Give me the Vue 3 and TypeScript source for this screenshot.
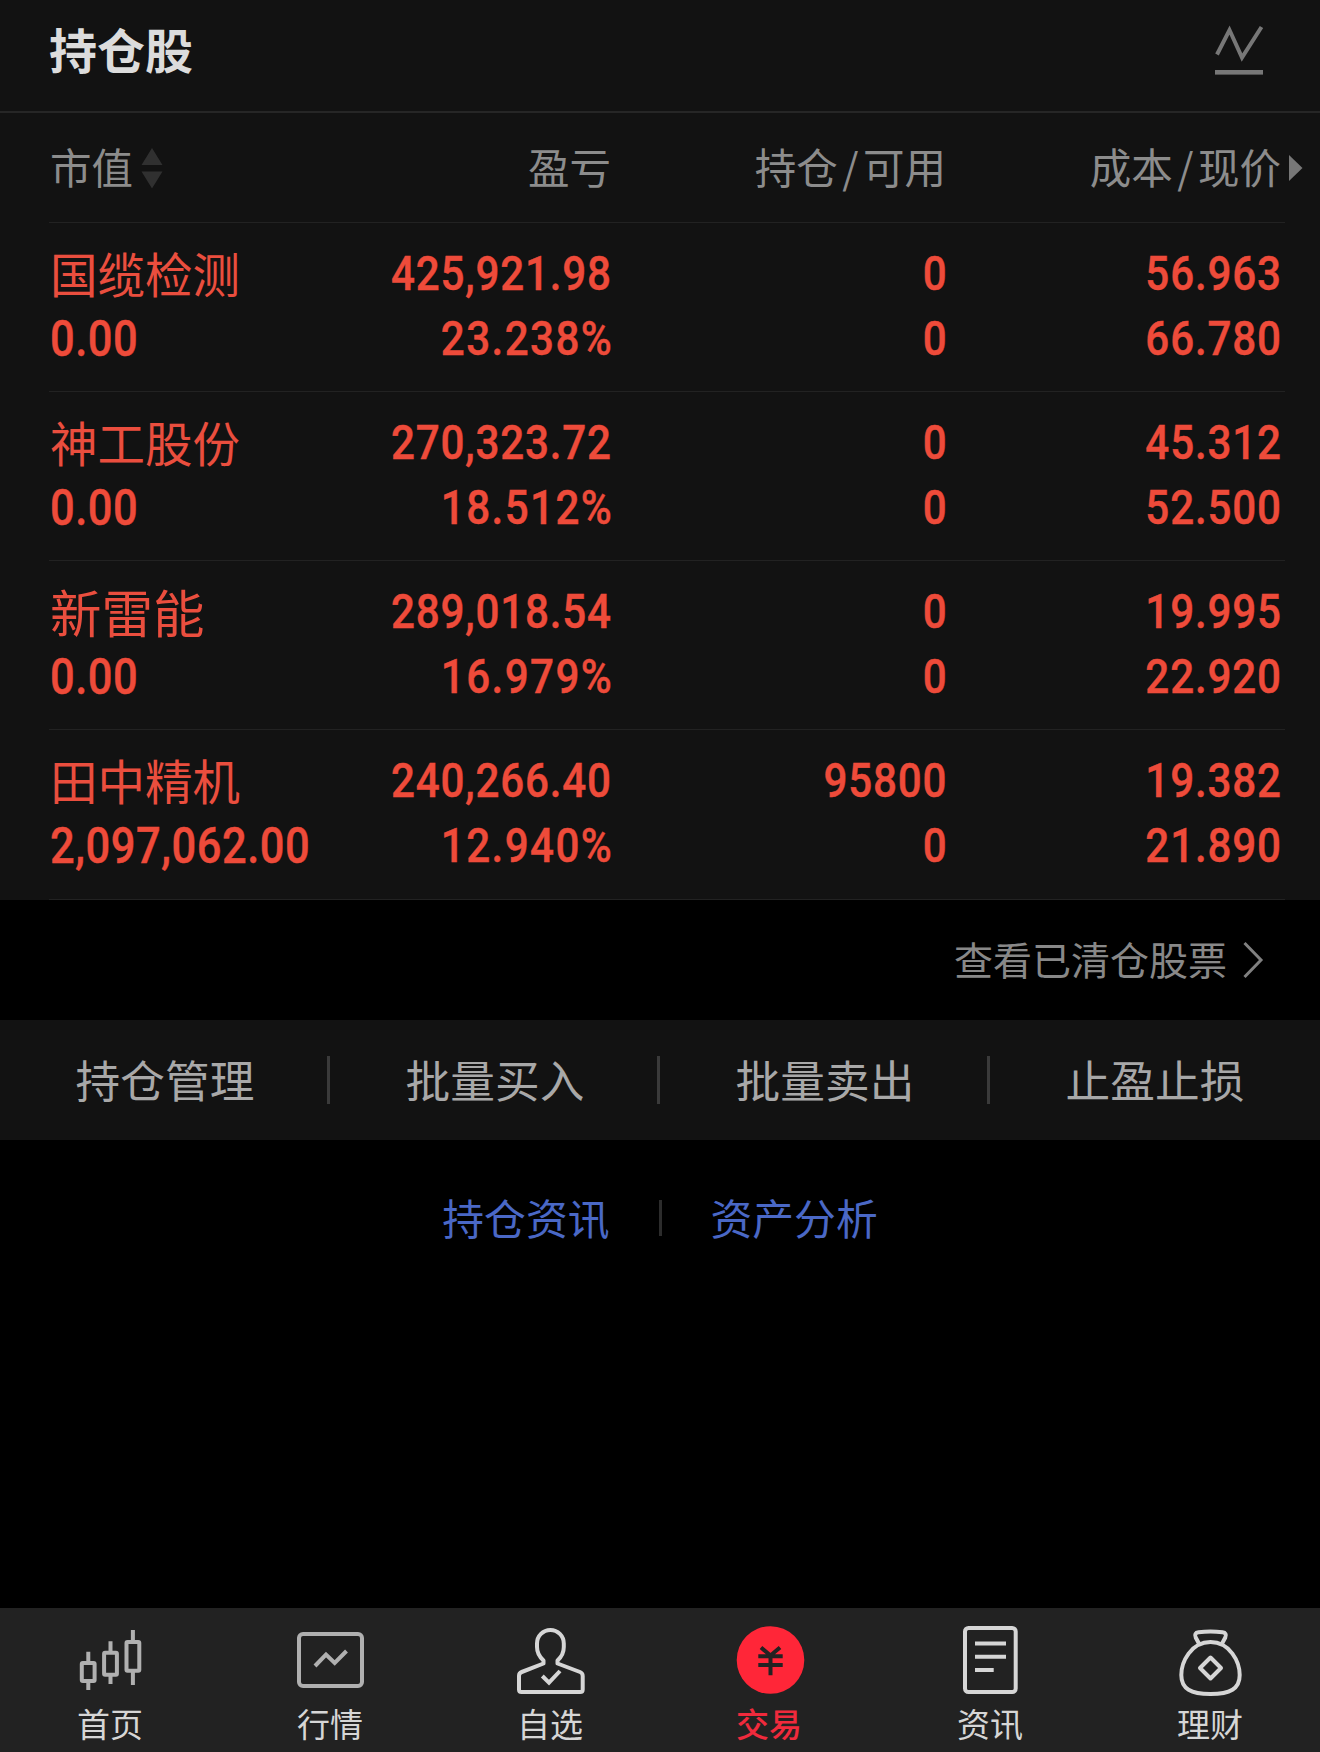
<script setup lang="ts">
interface Holding {
  name: string
  value: string
  profit: string
  ratio: string
  held: string
  available: string
  cost: string
  price: string
}

const holdings: Holding[] = [
  { name: '国缆检测', value: '0.00', profit: '425,921.98', ratio: '23.238%', held: '0', available: '0', cost: '56.963', price: '66.780' },
  { name: '神工股份', value: '0.00', profit: '270,323.72', ratio: '18.512%', held: '0', available: '0', cost: '45.312', price: '52.500' },
  { name: '新雷能', value: '0.00', profit: '289,018.54', ratio: '16.979%', held: '0', available: '0', cost: '19.995', price: '22.920' },
  { name: '田中精机', value: '2,097,062.00', profit: '240,266.40', ratio: '12.940%', held: '95800', available: '0', cost: '19.382', price: '21.890' },
]

const actions: string[] = ['持仓管理', '批量买入', '批量卖出', '止盈止损']
</script>

<template>
  <div class="app">
    <header class="title-bar">
      <h1>持仓股</h1>
      <svg class="chart-icon" width="50" height="52" viewBox="0 0 50 52">
        <path d="M3 30.5 15.5 6 28 33.5 47.5 3" fill="none" stroke="#777" stroke-width="4" />
        <rect x="1" y="46" width="48" height="4.6" fill="#777" />
      </svg>
    </header>

    <section class="holdings">
      <div class="table-head">
        <div class="head-left">
          <span>市值</span>
          <svg class="sort" width="22" height="42" viewBox="0 0 22 42">
            <path d="M11 1 21.5 18H.5zM11 41.500 21.500 24.500H.5z" fill="#303030" />
          </svg>
        </div>
        <div>盈亏</div>
        <div>持仓<i>/</i>可用</div>
        <div class="head-last">
          成本<i>/</i>现价
          <svg class="more" width="14" height="26" viewBox="0 0 14 26"><path d="M0 0 13.500 13 0 26z" fill="#777" /></svg>
        </div>
      </div>

      <div v-for="h in holdings" :key="h.name" class="row">
        <div class="cell left">
          <span class="name" :class="{ short: h.name.length < 4 }">{{ h.name }}</span>
          <span class="num">{{ h.value }}</span>
        </div>
        <div class="cell"><span class="num">{{ h.profit }}</span><span class="num ratio">{{ h.ratio }}</span></div>
        <div class="cell"><span class="num">{{ h.held }}</span><span class="num">{{ h.available }}</span></div>
        <div class="cell"><span class="num">{{ h.cost }}</span><span class="num">{{ h.price }}</span></div>
      </div>
    </section>

    <div class="cleared">
      <span>查看已清仓股票</span>
      <svg width="22" height="38" viewBox="0 0 22 38"><path d="M2.500 2 19 19 2.500 36" fill="none" stroke="#808080" stroke-width="3" /></svg>
    </div>

    <div class="actions">
      <div v-for="a in actions" :key="a" class="action">{{ a }}</div>
    </div>

    <div class="links">
      <a>持仓资讯</a>
      <span class="bar"></span>
      <a>资产分析</a>
    </div>

    <nav class="tabs">
      <div class="tab">
        <svg class="dim" viewBox="0 0 80 80">
          <rect x="11.800" y="42.900" width="12.800" height="18" rx="1" />
          <rect x="34.100" y="32.700" width="12.800" height="22" rx="1" />
          <rect x="56.500" y="22" width="12.800" height="28.800" rx="1" />
          <path d="M18.300 31.700V42M18.300 62V70M40.500 21.300V32M40.500 56V64M62.900 10V21M62.900 52V65" />
        </svg>
        <span>首页</span>
      </div>
      <div class="tab">
        <svg class="dim" viewBox="0 0 80 80">
          <rect x="9" y="14" width="63" height="52" rx="4" />
          <path d="M25 46 36 34.500 44.700 43 56.500 31" />
        </svg>
        <span>行情</span>
      </div>
      <div class="tab">
        <svg viewBox="0 0 80 80">
          <path d="M33.500 43.500V40.500C29 36.500 27 32 27 27V23.500A13.400 13.500 0 0 1 53.800 23.500V27C53.800 32 52 36.500 47.500 40.500V43.500L70 52Q72.700 53 72.700 56V69.500Q72.700 72 70.200 72H11.500Q9 72 9 69.500V56Q9 53 11.700 52Z" stroke-linejoin="round" />
          <path d="M32.300 56 39 62.700 50 51" />
        </svg>
        <span>自选</span>
      </div>
      <div class="tab active">
        <svg viewBox="0 0 80 80">
          <circle class="coin" cx="40.500" cy="40" r="33.800" />
          <path class="yen" d="M31 27.500 40.500 35.500 50 27.500M28.300 36.300H52.700M28.300 45H52.700M40.500 35.500V55.300" />
        </svg>
        <span>交易</span>
      </div>
      <div class="tab">
        <svg viewBox="0 0 80 80">
          <rect x="15" y="8" width="50.700" height="64" rx="3.500" />
          <path d="M25 23.400H56M25 36.700H56M25 50H43.700" />
        </svg>
        <span>资讯</span>
      </div>
      <div class="tab">
        <svg viewBox="0 0 80 80">
          <path d="M40.500 22C21 22 11.300 42 11.300 55C11.300 69 21 74 40.500 74S69.700 69 69.700 55C69.700 42 60 22 40.500 22Z" />
          <path d="M29.500 24.500 25.700 17.500C24.300 14.500 25.500 12.700 28.500 12.300Q40.500 10.700 52.500 12.300C55.500 12.700 56.700 14.500 55.300 17.500L51.500 24.500" />
          <path d="M40.500 37.500 51 48 40.500 58.500 30 48Z" stroke-linejoin="round" />
        </svg>
        <span>理财</span>
      </div>
    </nav>
  </div>
</template>

<style>
body {
  margin: 0;
  background: #000;
}
</style>

<style scoped>
.app {
  width: 1320px;
  height: 1752px;
  display: flex;
  flex-direction: column;
  background: #000;
  font-family: "Noto Sans CJK SC", sans-serif;
  overflow: hidden;
}
.title-bar {
  height: 111px;
  flex: none;
  display: flex;
  justify-content: space-between;
  align-items: flex-start;
  padding: 0 56px 0 49px;
  background: #121212;
  border-bottom: 2px solid #262626;
}
h1 {
  margin: 0;
  font-size: 48px;
  line-height: 97px;
  font-weight: 700;
  color: #dcdcdc;
}
.chart-icon {
  margin-top: 24px;
}
.holdings {
  flex: none;
  padding-bottom: 1px;
  background: #121212;
}
.table-head,
.row {
  display: grid;
  grid-template-columns: 280px 281px 335px 335px;
  position: relative;
  padding: 0 39px 0 50px;
  text-align: right;
}
.table-head::after,
.row::after {
  content: "";
  position: absolute;
  left: 49px;
  right: 35px;
  bottom: 0;
  height: 1px;
  background: #222;
}
.row:last-child::after {
  bottom: -1px;
}
.table-head {
  height: 110px;
  line-height: 106px;
  font-size: 41.500px;
  color: #8c8c8c;
  white-space: nowrap;
}
.table-head i {
  font-style: normal;
  margin: 0 4.500px;
}
.head-left {
  display: flex;
  align-items: flex-start;
}
.sort {
  margin: 34px 0 0 8px;
}
.head-last {
  position: relative;
}
.more {
  position: absolute;
  left: calc(100% + 8px);
  top: 42px;
}
.row {
  height: 169px;
}
.cell {
  display: flex;
  flex-direction: column;
  align-items: flex-end;
  padding-top: 18px;
  white-space: nowrap;
}
.cell.left {
  align-items: flex-start;
}
.cell .name {
  height: 65px;
  line-height: 63px;
  font-size: 47.500px;
  color: #ea4e3e;
}
.cell .name.short {
  font-size: 51.500px;
}
.num {
  height: 65px;
  line-height: 65px;
  font-family: Roboto, sans-serif;
  font-size: 48.500px;
  font-weight: 500;
  letter-spacing: 0.900px;
  margin-right: -1px;
  color: #ee4b3a;
  -webkit-text-stroke: 0.400px #ee4b3a;
  transform: scaleX(0.87);
  transform-origin: 100% 50%;
}
.num.ratio {
  margin-right: -2px;
  letter-spacing: 1.600px;
}
.cell.left .num {
  font-size: 50px;
  line-height: 67px;
  letter-spacing: 0.600px;
  transform-origin: 0 50%;
}
.cleared {
  height: 120px;
  flex: none;
  display: flex;
  align-items: center;
  justify-content: flex-end;
  gap: 15px;
  padding-right: 56px;
  font-size: 39px;
  color: #888;
}
.cleared span {
  line-height: 117px;
  padding-bottom: 3px;
}
.actions {
  height: 120px;
  flex: none;
  display: grid;
  grid-template-columns: repeat(4, 1fr);
  background: #121212;
}
.action {
  position: relative;
  text-align: center;
  font-size: 44.700px;
  line-height: 117px;
  color: #a8a8a8;
}
.action + .action::before {
  content: "";
  position: absolute;
  left: -3px;
  top: 36px;
  width: 3px;
  height: 48px;
  background: #3a3a3a;
}
.links {
  flex: 1;
  display: flex;
  justify-content: center;
  align-items: flex-start;
  gap: 49px;
  padding-top: 59px;
  font-size: 41.800px;
  line-height: 36px;
  color: #4a68c6;
}
.links .bar {
  width: 3px;
  height: 36px;
  margin-top: 1px;
  background: #2c2c2c;
}
.tabs {
  height: 144px;
  flex: none;
  display: grid;
  grid-template-columns: repeat(6, 1fr);
  background: #222;
}
.tab {
  display: flex;
  flex-direction: column;
  align-items: center;
  padding-top: 12px;
  font-size: 33px;
  line-height: 47px;
  color: #d6d6d6;
}
.tab svg {
  width: 80px;
  height: 80px;
  fill: none;
  stroke: #d6d6d6;
  stroke-width: 4;
}
.tab svg.dim {
  stroke: #b0b0b0;
}
.tab.active {
  color: #f02a3c;
}
.tab.active span {
  margin-right: 2px;
  font-weight: 500;
}
.tab svg .coin {
  fill: #ff2638;
  stroke: none;
}
.tab svg .yen {
  stroke: #222;
}
</style>
